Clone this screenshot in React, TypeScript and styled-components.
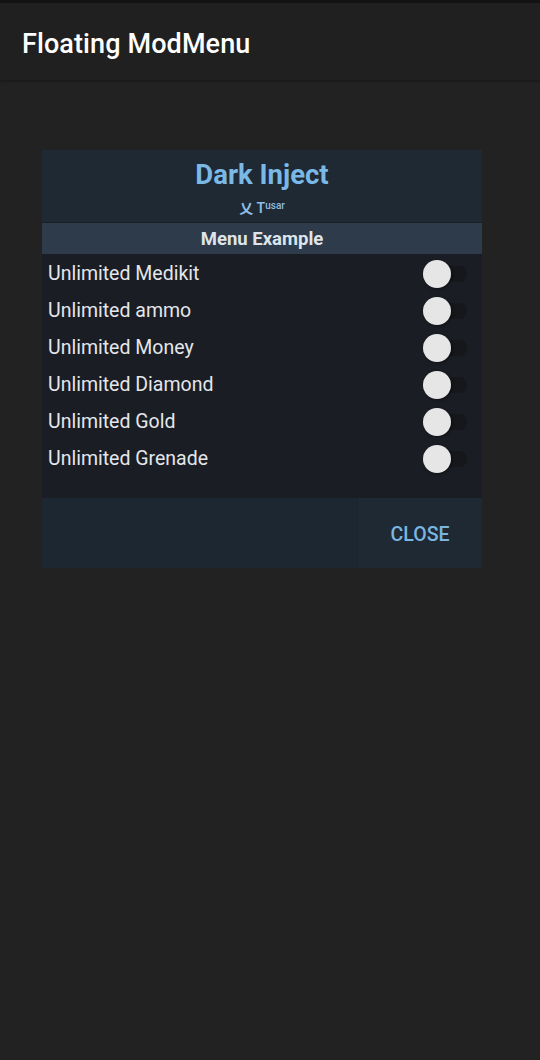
import React, { useState } from "react";
import styled, { createGlobalStyle } from "styled-components";

const GlobalStyle = createGlobalStyle`
  html, body {
    margin: 0;
    padding: 0;
    background: #222222;
    font-family: Roboto, "Noto Sans", "Liberation Sans", sans-serif;
  }
`;

const Page = styled.div`
  min-height: 1060px;
  background: #222222;
  border-top: 3px solid #141414;
`;

const AppBar = styled.header`
  height: 77px;
  background: #202020;
  display: flex;
  align-items: center;
  padding: 4px 0 0 22px;
  box-sizing: border-box;
  box-shadow: 0 1px 3px rgba(0, 0, 0, 0.35);
`;

const AppTitle = styled.h1`
  margin: 0;
  font-size: 27px;
  font-weight: 500;
  color: #ffffff;
  letter-spacing: 0.1px;
`;

const Panel = styled.div`
  width: 440px;
  margin: 70px 0 0 42px;
  background: #1a1d24;
  display: flex;
  flex-direction: column;
`;

const Header = styled.div`
  height: 72px;
  background: #1e2933;
  display: flex;
  flex-direction: column;
  align-items: center;
  padding-top: 8px;
  box-sizing: border-box;
`;

const Title = styled.div`
  font-size: 27.5px;
  font-weight: 700;
  color: #7ab8e6;
  line-height: 34px;
`;

const Credit = styled.div`
  font-size: 14px;
  font-weight: 600;
  color: #8dbde3;
  line-height: 16px;
  margin-top: 6px;
  font-family: Roboto, "Noto Sans CJK SC", sans-serif;

  sup {
    font-size: 10px;
    font-weight: 500;
    vertical-align: 4px;
  }
`;

const Category = styled.div`
  height: 31px;
  margin-top: 1px;
  background: #2e3b4a;
  color: #dfe4ea;
  font-size: 18.5px;
  font-weight: 700;
  display: flex;
  align-items: center;
  justify-content: center;
`;

const List = styled.div`
  padding: 1px 0 21px;
`;

const Row = styled.div`
  height: 37px;
  display: flex;
  align-items: center;
  justify-content: space-between;
  padding: 0 15px 0 6px;
`;

const Label = styled.span`
  font-size: 19.5px;
  color: #e4e6ea;
`;

const Track = styled.button<{ $on: boolean }>`
  position: relative;
  width: 44px;
  height: 16px;
  border: none;
  padding: 0;
  border-radius: 8px;
  background: ${(p) => (p.$on ? "#3f6f93" : "#15171b")};
  cursor: pointer;
`;

const Thumb = styled.span<{ $on: boolean }>`
  position: absolute;
  top: -6px;
  left: ${(p) => (p.$on ? "16px" : "0")};
  width: 28px;
  height: 28px;
  border-radius: 50%;
  background: ${(p) => (p.$on ? "#7ab8e6" : "#e6e6e6")};
  box-shadow: 1px 1px 3px rgba(0, 0, 0, 0.45);
`;

const Footer = styled.div`
  height: 70px;
  background: #1d2731;
  display: flex;
  justify-content: flex-end;
`;

const CloseButton = styled.button`
  width: 125px;
  border: none;
  border-left: 1px solid #1b242d;
  background: #1e2933;
  color: #7ab6e0;
  font-family: Roboto, "Liberation Sans", sans-serif;
  font-size: 19.5px;
  font-weight: 500;
  padding-top: 3px;
  cursor: pointer;
`;

const features = [
  "Unlimited Medikit",
  "Unlimited ammo",
  "Unlimited Money",
  "Unlimited Diamond",
  "Unlimited Gold",
  "Unlimited Grenade",
];

function App() {
  const [state, setState] = useState<boolean[]>(features.map(() => false));

  const toggle = (i: number) =>
    setState((s) => s.map((v, j) => (j === i ? !v : v)));

  return (
    <>
      <GlobalStyle />
      <Page>
        <AppBar>
          <AppTitle>Floating ModMenu</AppTitle>
        </AppBar>
        <Panel>
          <Header>
            <Title>Dark Inject</Title>
            <Credit>
              乂 T<sup>usar</sup>
            </Credit>
          </Header>
          <Category>Menu Example</Category>
          <List>
            {features.map((f, i) => (
              <Row key={f}>
                <Label>{f}</Label>
                <Track $on={state[i]} onClick={() => toggle(i)}>
                  <Thumb $on={state[i]} />
                </Track>
              </Row>
            ))}
          </List>
          <Footer>
            <CloseButton>CLOSE</CloseButton>
          </Footer>
        </Panel>
      </Page>
    </>
  );
}

export default App;
